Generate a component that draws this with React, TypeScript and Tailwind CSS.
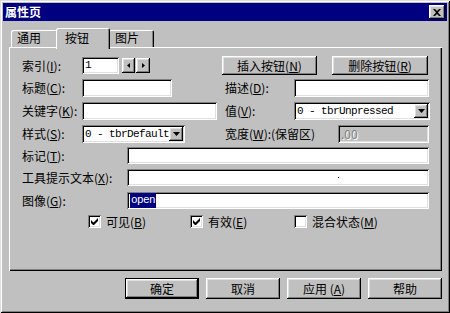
import React from 'react';

const raised =
  'bg-[#c0c0c0] shadow-[inset_-1px_-1px_#000,inset_1px_1px_#fff,inset_-2px_-2px_#808080,inset_2px_2px_#dfdfdf]';
const sunken =
  'shadow-[inset_1px_1px_#808080,inset_-1px_-1px_#fff,inset_2px_2px_#000,inset_-2px_-2px_#dfdfdf]';
const mono = "font-['Liberation_Mono',monospace] text-[11px] tracking-[-0.6px] leading-none";

// label with underlined access key, e.g. 索引(I):
const Label: React.FC<{ t: string; k: string; after?: string; w: string }> = ({ t, k, after = '):', w }) => (
  <span className={`${w} shrink-0 whitespace-nowrap leading-none`}>
    {t}(<u>{k}</u>{after}
  </span>
);

const Field: React.FC<{ w: string; h?: string; children?: React.ReactNode }> = ({ w, h = 'h-[18px]', children }) => (
  <div className={`${w} ${h} ${sunken} bg-white flex items-center pl-[3px]`}>{children}</div>
);

const Arrow = () => (
  <svg width="7" height="4" viewBox="0 0 7 4">
    <path d="M0 0h7L3.5 4z" fill="#000" />
  </svg>
);

const Combo: React.FC<{ w: string; text: string }> = ({ w, text }) => (
  <div className={`${w} h-[18px] ${sunken} bg-white flex items-center pl-[3px] pr-[2px]`}>
    <span className={`${mono} flex-1`}>{text}</span>
    <div className={`w-[14px] h-[14px] ${raised} flex items-center justify-center`}>
      <Arrow />
    </div>
  </div>
);

const Check: React.FC<{ on: boolean }> = ({ on }) => (
  <div className={`w-[13px] h-[13px] bg-white ${sunken} flex items-center justify-center shrink-0`}>
    {on && (
      <svg width="7" height="7" viewBox="0 0 7 7">
        <path d="M0 2v3l2 2h1l4-4V0L2.5 4.5z" fill="#000" />
      </svg>
    )}
  </div>
);

const Btn: React.FC<{ w: string; h?: string; children: React.ReactNode }> = ({ w, h = 'h-[19px]', children }) => (
  <div className={`${w} ${h} ${raised} flex items-center justify-center leading-none`}>{children}</div>
);

export default function App() {
  return (
    <div className="w-[450px] h-[313px] bg-[#c0c0c0] p-[3px] flex flex-col text-[12px] text-black font-['Noto_Sans_CJK_SC',sans-serif] shadow-[inset_1px_1px_#dfdfdf,inset_-1px_-1px_#000,inset_2px_2px_#fff,inset_-2px_-2px_#808080]">
      {/* Title bar */}
      <div className="h-[18px] bg-[#000080] flex items-center pl-[2px] pr-[2px]">
        <span className="text-white font-bold leading-none">属性页</span>
        <div className={`ml-auto w-[16px] h-[14px] ${raised} flex items-center justify-center`}>
          <svg width="8" height="7" viewBox="0 0 8 7">
            <path d="M0 0h2l2 2 2-2h2L5 3.5 8 7H6L4 5 2 7H0l3-3.5z" fill="#000" />
          </svg>
        </div>
      </div>

      <div className="ml-[6px] mt-[7px] w-[433px] flex flex-col">
        {/* Tabs */}
        <div className="flex items-end h-[19px] pl-[2px]">
          <div className="w-[47px] h-[17px] pl-[6px] pt-[2px] rounded-t-[2px] shadow-[inset_1px_1px_#fff,inset_-1px_0_#000,inset_-2px_0_#808080] leading-none">
            通用
          </div>
          <div className="relative z-10 w-[54px] h-[21px] -mx-[2px] -mb-[2px] pl-[9px] pt-[4px] bg-[#c0c0c0] rounded-t-[2px] shadow-[inset_1px_1px_#fff,inset_-1px_0_#000,inset_-2px_0_#808080] leading-none">
            按钮
          </div>
          <div className="w-[46px] h-[17px] pl-[7px] pt-[2px] rounded-t-[2px] shadow-[inset_1px_1px_#fff,inset_-1px_0_#000,inset_-2px_0_#808080] leading-none">
            图片
          </div>
        </div>

        {/* Panel */}
        <div className="h-[224px] pl-[13px] pt-[9px] flex flex-col shadow-[inset_1px_1px_#fff,inset_-1px_-1px_#000,inset_-2px_-2px_#808080]">
          <div className="flex items-center h-[19px]">
            <Label t="索引" k="I" w="w-[60px]" />
            <Field w="w-[37px]" h="h-[17px]">
              <span className={mono}>1</span>
            </Field>
            <div className={`ml-[3px] w-[13px] h-[15px] ${raised} flex items-center justify-center`}>
              <svg width="3" height="5" viewBox="0 0 3 5">
                <path d="M3 0v5L0 2.5z" fill="#000" />
              </svg>
            </div>
            <div className={`ml-[1px] w-[14px] h-[15px] ${raised} flex items-center justify-center`}>
              <svg width="3" height="5" viewBox="0 0 3 5">
                <path d="M0 0v5l3-2.5z" fill="#000" />
              </svg>
            </div>
            <div className="ml-[72px]">
              <Btn w="w-[95px]">
                插入按钮(<u>N</u>)
              </Btn>
            </div>
            <div className="ml-[15px]">
              <Btn w="w-[96px]">
                删除按钮(<u>R</u>)
              </Btn>
            </div>
          </div>

          <div className="flex items-center h-[18px] mt-[4px]">
            <div className="w-[203px] flex items-center">
              <Label t="标题" k="C" w="w-[60px]" />
              <Field w="w-[90px]" />
            </div>
            <Label t="描述" k="D" w="w-[69px]" />
            <Field w="w-[135px]" />
          </div>

          <div className="flex items-center h-[18px] mt-[5px]">
            <div className="w-[203px] flex items-center">
              <Label t="关键字" k="K" w="w-[60px]" />
              <Field w="w-[135px]" />
            </div>
            <Label t="值" k="V" w="w-[69px]" />
            <Combo w="w-[136px]" text="0 - tbrUnpressed" />
          </div>

          <div className="flex items-center h-[18px] mt-[5px]">
            <div className="w-[203px] flex items-center">
              <Label t="样式" k="S" w="w-[60px]" />
              <Combo w="w-[103px]" text="0 - tbrDefault" />
            </div>
            <Label t="宽度" k="W" after="):(保留区)" w="w-[113px]" />
            <div className={`w-[91px] h-[18px] ${sunken} bg-[#c0c0c0] flex items-center pl-[3px]`}>
              <span className="text-[#808080] leading-none [text-shadow:1px_1px_#fff]">.00</span>
            </div>
          </div>

          <div className="flex items-center h-[17px] mt-[4px]">
            <Label t="标记" k="T" w="w-[105px]" />
            <Field w="w-[302px]" h="h-[17px]" />
          </div>

          <div className="flex items-center h-[17px] mt-[5px]">
            <Label t="工具提示文本" k="X" w="w-[105px]" />
            <Field w="w-[302px]" h="h-[17px]">
              <span className="ml-[208px] w-[1px] h-[1px] bg-black" />
            </Field>
          </div>

          <div className="flex items-center h-[17px] mt-[6px]">
            <Label t="图像" k="G" w="w-[105px]" />
            <Field w="w-[302px]" h="h-[17px]">
              <span className={`${mono} bg-[#000080] text-white px-[1px] py-[2px]`}>open</span>
            </Field>
          </div>

          <div className="flex items-center h-[13px] mt-[6px] pl-[66px]">
            <div className="w-[102px] flex items-center gap-[5px]">
              <Check on />
              <span className="leading-none">
                可见(<u>B</u>)
              </span>
            </div>
            <div className="w-[104px] flex items-center gap-[5px]">
              <Check on />
              <span className="leading-none">
                有效(<u>E</u>)
              </span>
            </div>
            <div className="flex items-center gap-[5px]">
              <Check on={false} />
              <span className="leading-none">
                混合状态(<u>M</u>)
              </span>
            </div>
          </div>
        </div>
      </div>

      {/* Dialog buttons */}
      <div className="flex justify-end gap-[7px] mt-[7px] pr-[5px]">
        <div className="w-[74px] h-[21px] border border-black">
          <Btn w="w-full" h="h-full">确定</Btn>
        </div>
        <Btn w="w-[74px]" h="h-[21px]">取消</Btn>
        <Btn w="w-[74px]" h="h-[21px]">
          应用 (<u>A</u>)
        </Btn>
        <Btn w="w-[74px]" h="h-[21px]">帮助</Btn>
      </div>
    </div>
  );
}
